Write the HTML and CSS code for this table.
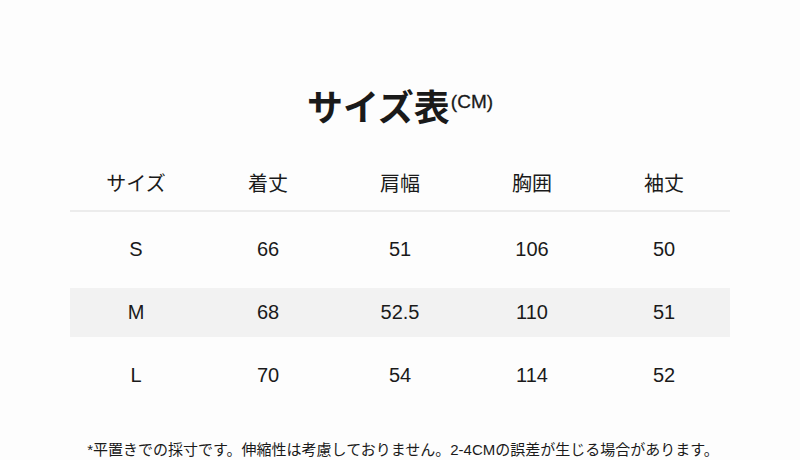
FILE: index.html
```html
<!DOCTYPE html>
<html lang="ja">
<head>
<meta charset="utf-8">
<link rel="stylesheet" href="styles.css">
</head>
<body>
<div class="page">
  <h1 class="title">サイズ表<span class="unit">(CM)</span></h1>
  <div class="table">
    <div class="row head">
      <div>サイズ</div><div>着丈</div><div>肩幅</div><div>胸囲</div><div>袖丈</div>
    </div>
    <div class="rows">
      <div class="row">
        <div>S</div><div>66</div><div>51</div><div>106</div><div>50</div>
      </div>
      <div class="row alt">
        <div>M</div><div>68</div><div>52.5</div><div>110</div><div>51</div>
      </div>
      <div class="row">
        <div>L</div><div>70</div><div>54</div><div>114</div><div>52</div>
      </div>
    </div>
  </div>
  <p class="note">*平置きでの採寸です。伸縮性は考慮しておりません。2-4CMの誤差が生じる場合があります。</p>
</div>
</body>
</html>
```
FILE: styles.css
```css
html, body {
  margin: 0;
  padding: 0;
  background: #fdfdfd;
}
body {
  width: 800px;
  height: 460px;
  overflow: hidden;
  font-family: "Liberation Sans", "Noto Sans CJK JP", sans-serif;
  color: #1a1a1a;
}
.page {
  display: flex;
  flex-direction: column;
  align-items: center;
  padding-top: 80px;
}
.title {
  margin: 0;
  font-family: "Liberation Sans", "Noto Sans CJK JP", sans-serif;
  font-weight: 700;
  font-size: 36px;
  line-height: 44px;
  height: 44px;
  color: #1a1a1a;
  letter-spacing: 0;
}
.unit {
  font-size: 19px;
  font-weight: 400;
  vertical-align: 13px;
  letter-spacing: 0;
  margin-left: 1px;
  -webkit-text-stroke: 0.3px #1a1a1a;
}
.table {
  width: 660px;
  margin-top: 31px;
}
.row {
  display: grid;
  grid-template-columns: repeat(5, 1fr);
  height: 49px;
  align-items: center;
  text-align: center;
  font-size: 20px;
}
.head {
  height: 55px;
  border-bottom: 2px solid #ececec;
  font-family: "Noto Sans CJK JP", sans-serif;
  font-weight: 400;
  align-items: start;
}
.head div {
  padding-top: 13px;
}
.rows {
  display: flex;
  flex-direction: column;
  gap: 14px;
  padding-top: 13px;
}
.alt {
  background: #f2f2f2;
}
.note {
  margin: 0;
  margin-top: 40px;
  padding-left: 6px;
  font-family: "Liberation Sans", "Noto Sans CJK JP", sans-serif;
  font-size: 15px;
  line-height: 20px;
  color: #1a1a1a;
  letter-spacing: 0;
}
```
